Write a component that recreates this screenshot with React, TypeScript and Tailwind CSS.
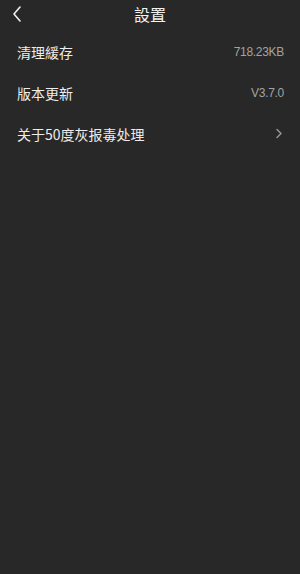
import React from "react";

const font = { fontFamily: '"Noto Sans CJK TC", "Noto Sans CJK SC", "Liberation Sans", sans-serif' };

function Row({ label, value, arrow }: { label: string; value?: string; arrow?: boolean }) {
  return (
    <div className="flex h-[41px] items-center justify-between pl-[17px] pr-[16px]">
      <span className="text-[14px] leading-none text-[#ececec]">{label}</span>
      {value && (
        <span className="text-[12px] leading-none tracking-[-0.3px] text-[#a3a3a3]" style={{ fontFamily: '"Liberation Sans", sans-serif' }}>
          {value}
        </span>
      )}
      {arrow && (
        <svg width="8" height="11" viewBox="0 0 8 11" className="mr-[1px]">
          <path d="M2 1.5 L6 5.5 L2 9.5" fill="none" stroke="#9a9a9a" strokeWidth="1.4" strokeLinecap="round" strokeLinejoin="round" />
        </svg>
      )}
    </div>
  );
}

export default function App() {
  return (
    <div className="h-[574px] w-[300px] bg-[#282828]" style={font}>
      <div className="relative flex h-[27px] items-center justify-center">
        <svg width="12" height="16" viewBox="0 0 12 16" className="absolute left-[11px] top-[6px]">
          <path d="M9 1 L3 8 L9 15" fill="none" stroke="#f0f0f0" strokeWidth="1.6" strokeLinecap="round" strokeLinejoin="round" />
        </svg>
        <span className="text-[16px] leading-none text-[#f2f2f2]">設置</span>
      </div>
      <div className="pt-[4px]">
        <Row label="清理緩存" value="718.23KB" />
        <Row label="版本更新" value="V3.7.0" />
        <Row label="关于50度灰报毒处理" arrow />
      </div>
    </div>
  );
}
